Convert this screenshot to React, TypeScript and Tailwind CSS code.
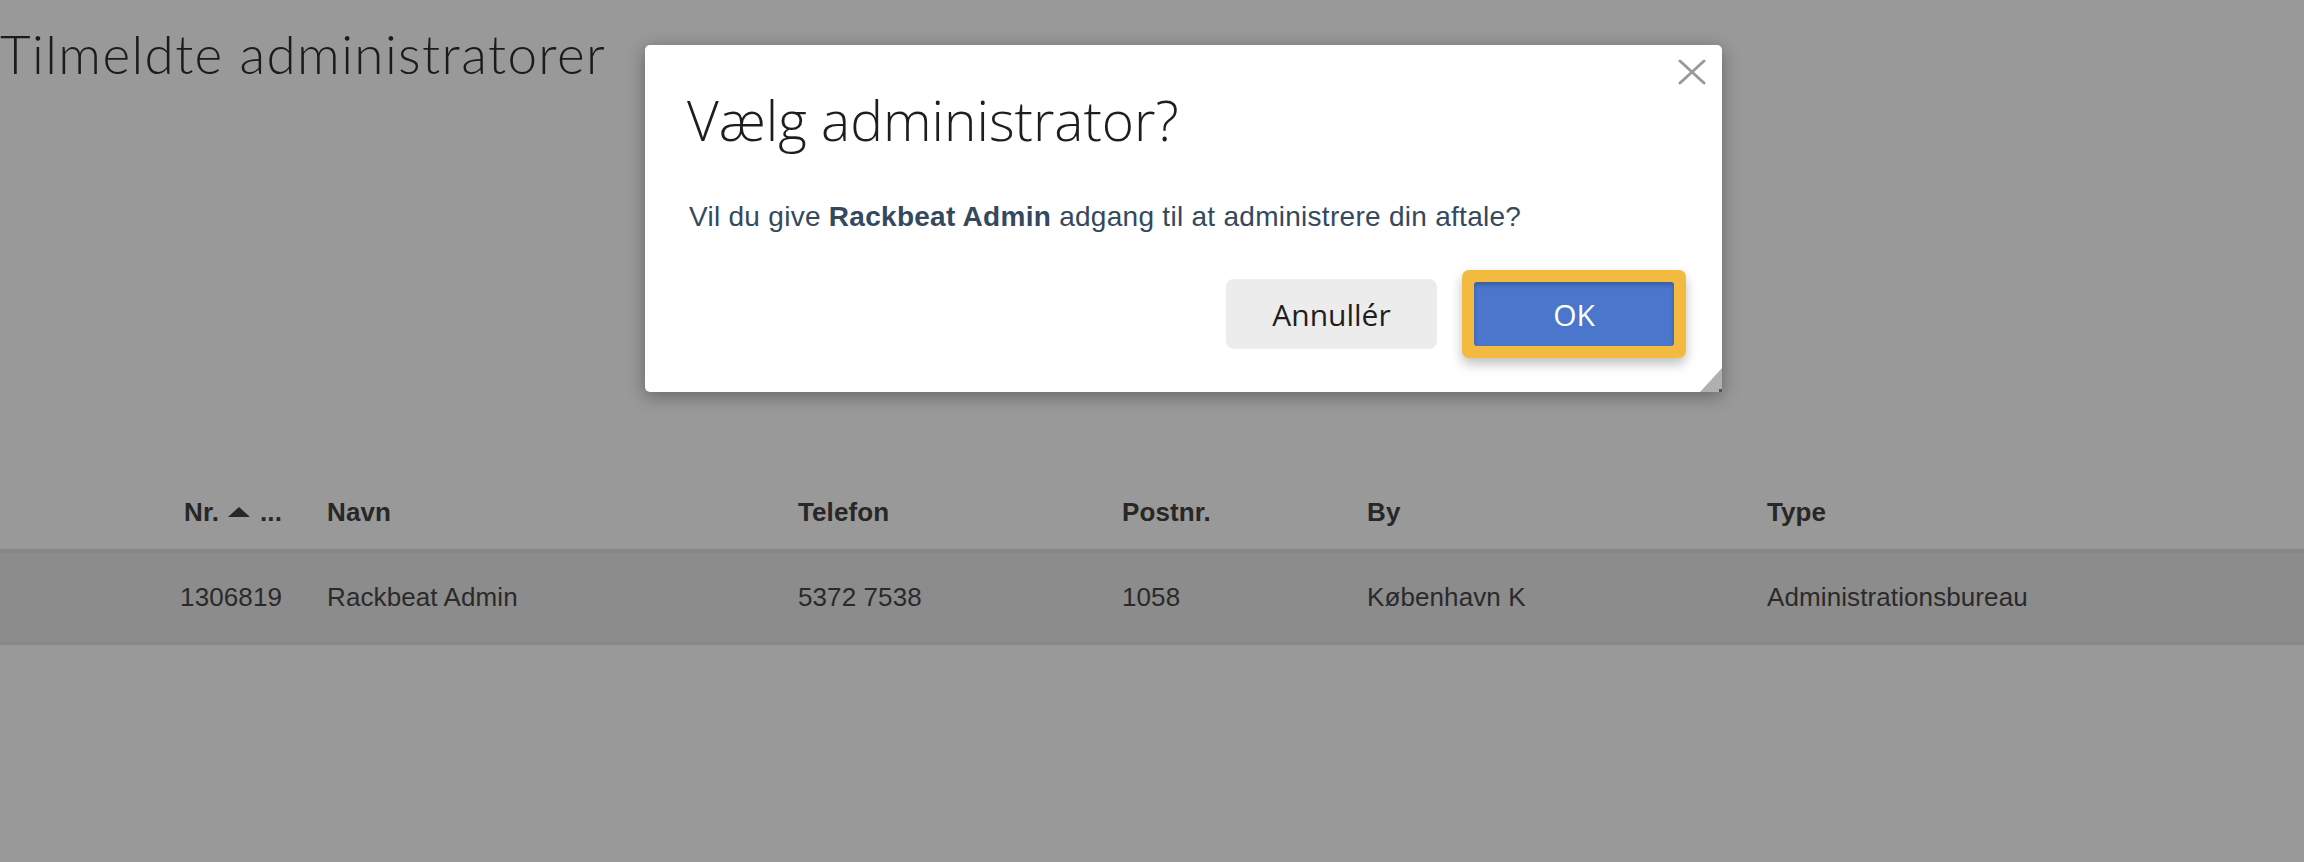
import React from "react";

const cols = "grid grid-cols-[327px_471px_324px_245px_400px_1fr]";

export default function App() {
  return (
    <div className="relative w-[2304px] h-[862px] overflow-hidden bg-[#999999] font-['Liberation_Sans',Arial,sans-serif]">
      {/* Page */}
      <div className="pt-[24px]">
        <h1 className="font-['Lato',sans-serif] font-light text-[53px] leading-[60px] tracking-[1.4px] text-[#1b1b1b] whitespace-nowrap">
          Tilmeldte administratorer
        </h1>
      </div>

      <div className="mt-[391px]">
        <div className={`${cols} h-[74px] items-center text-[26px] tracking-[0.1px] font-bold text-[#272727]`}>
          <div className="flex items-center justify-end pr-[45px]">
            <span>Nr.</span>
            <svg width="22" height="10" viewBox="0 0 22 10" className="ml-[9px] mr-[10px]">
              <polygon points="11,0 22,10 0,10" fill="#272727" />
            </svg>
            <span>...</span>
          </div>
          <div>Navn</div>
          <div>Telefon</div>
          <div>Postnr.</div>
          <div>By</div>
          <div>Type</div>
        </div>
        <div className="border-t-[4px] border-b-[3px] border-[#878787] bg-[#8c8c8c]">
          <div className={`${cols} h-[89px] items-center text-[26px] tracking-[0.1px] text-[#2a2a2a]`}>
            <div className="text-right pr-[45px]">1306819</div>
            <div>Rackbeat Admin</div>
            <div>5372 7538</div>
            <div>1058</div>
            <div>København K</div>
            <div>Administrationsbureau</div>
          </div>
        </div>
      </div>

      {/* Dialog */}
      <div className="absolute left-[645px] top-[45px] w-[1077px] h-[347px] bg-white rounded-[5px] shadow-[0_4px_18px_rgba(0,0,0,0.35)] pt-[43px] pl-[42px] pr-[36px]">
        <button className="absolute right-[16px] top-[14px] w-[28px] h-[26px]">
          <svg width="28" height="26" viewBox="0 0 28 26">
            <line x1="2" y1="2" x2="26" y2="24" stroke="#9a9a9a" strokeWidth="3" strokeLinecap="round" />
            <line x1="26" y1="2" x2="2" y2="24" stroke="#9a9a9a" strokeWidth="3" strokeLinecap="round" />
          </svg>
        </button>
        <h2 className="font-['Open_Sans',sans-serif] font-light text-[55px] leading-[64px] text-[#1e1e1e] whitespace-nowrap">
          Vælg administrator?
        </h2>
        <p className="mt-[45px] pl-[2px] text-[28px] leading-[40px] tracking-[0.28px] text-[#34495e] whitespace-nowrap">
          Vil du give <b>Rackbeat Admin</b> adgang til at administrere din aftale?
        </p>
        <div className="mt-[33px] flex items-center justify-end gap-[25px]">
          <button className="w-[211px] h-[70px] rounded-[8px] bg-[#ececec] font-['Open_Sans',sans-serif] text-[30px] text-[#1e1e1e]">
            Annullér
          </button>
          <div className="rounded-[7px] bg-[#f2bb40] p-[12px] shadow-[0_6px_12px_rgba(0,0,0,0.25)]">
            <button className="w-[200px] h-[64px] rounded-[3px] bg-[#4a76cb] shadow-[inset_0_3px_4px_rgba(0,0,0,0.22)] font-['Open_Sans',sans-serif] text-[30px] text-white">
              OK
            </button>
          </div>
        </div>
        <svg width="22" height="24" viewBox="0 0 22 24" className="absolute right-0 bottom-0">
          <polygon points="22,0 22,24 0,24" fill="#b0b0b0" />
          <rect x="19" y="21" width="3" height="3" fill="#555" />
        </svg>
      </div>
    </div>
  );
}
